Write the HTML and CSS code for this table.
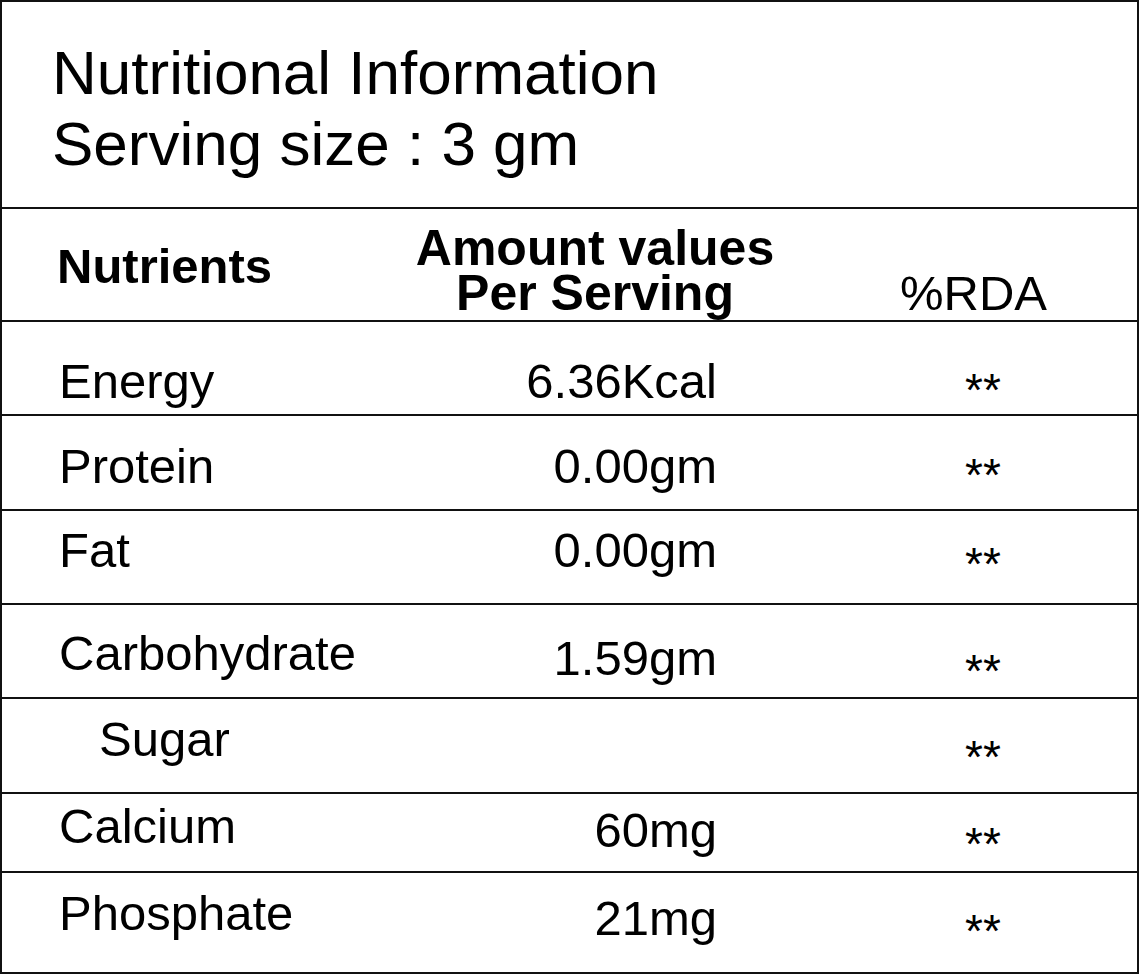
FILE: index.html
```html
<!DOCTYPE html>
<html lang="en">
<head>
<meta charset="utf-8">
<title>Nutritional Information</title>
<link rel="stylesheet" href="styles.css">
</head>
<body>
<div class="label">
  <div class="title">Nutritional Information<br>Serving size : 3 gm</div>
  <div class="head">
    <div class="h-name">Nutrients</div>
    <div class="h-amount"><div class="h-line">Amount values</div><div class="h-line">Per Serving</div></div>
    <div class="h-rda">%RDA</div>
  </div>
  <div class="row energy"><div class="name">Energy</div><div class="amt">6.36Kcal</div><div class="rda">**</div></div>
  <div class="row protein"><div class="name">Protein</div><div class="amt">0.00gm</div><div class="rda">**</div></div>
  <div class="row fat"><div class="name">Fat</div><div class="amt">0.00gm</div><div class="rda">**</div></div>
  <div class="row carb"><div class="name">Carbohydrate</div><div class="amt">1.59gm</div><div class="rda">**</div></div>
  <div class="row sugar"><div class="name sub">Sugar</div><div class="amt"></div><div class="rda">**</div></div>
  <div class="row calcium"><div class="name">Calcium</div><div class="amt">60mg</div><div class="rda">**</div></div>
  <div class="row phosphate"><div class="name">Phosphate</div><div class="amt">21mg</div><div class="rda">**</div></div>
</div>
</body>
</html>
```

FILE: styles.css
```css
html, body {
  margin: 0;
  padding: 0;
  background: #fff;
}

body {
  font-family: "Liberation Sans", Arial, sans-serif;
  color: #000;
}

.label {
  width: 1139px;
  box-sizing: border-box;
  border: 2px solid #111;
}

.title {
  height: 205px;
  box-sizing: border-box;
  padding: 35px 0 0 50px;
  font-size: 62px;
  line-height: 71px;
}

.head {
  height: 113px;
  box-sizing: border-box;
  border-top: 2px solid #111;
  display: grid;
  grid-template-columns: 400px 386px 1fr;
}

.h-name {
  font-weight: bold;
  font-size: 49px;
  line-height: 49px;
  padding: 33px 0 0 55px;
}

.h-amount {
  font-weight: bold;
  font-size: 50px;
  text-align: center;
  white-space: nowrap;
  padding-top: 19px;
}

.h-line {
  height: 45px;
  line-height: 40px;
}

.h-rda {
  font-size: 49px;
  line-height: 49px;
  padding: 60px 0 0 112px;
}

.row {
  box-sizing: border-box;
  border-top: 2px solid #111;
  display: grid;
  grid-template-columns: 400px 315px 1fr;
  font-size: 49px;
  line-height: 49px;
}

.name {
  padding-left: 57px;
}

.name.sub {
  padding-left: 97px;
}

.amt {
  text-align: right;
}

.rda {
  font-size: 46px;
  line-height: 46px;
  padding-left: 248px;
}

.energy { height: 94px; }
.energy .name, .energy .amt { padding-top: 35px; }
.energy .rda { padding-top: 45px; }

.protein { height: 95px; }
.protein .name, .protein .amt { padding-top: 26px; }
.protein .rda { padding-top: 36px; }

.fat { height: 94px; }
.fat .name, .fat .amt { padding-top: 15px; }
.fat .rda { padding-top: 30px; }

.carb { height: 94px; }
.carb .name { padding-top: 24px; }
.carb .amt { padding-top: 29px; }
.carb .rda { padding-top: 43px; }

.sugar { height: 95px; }
.sugar .name { padding-top: 16px; }
.sugar .rda { padding-top: 35px; }

.calcium { height: 79px; }
.calcium .name { padding-top: 8px; }
.calcium .amt { padding-top: 12px; }
.calcium .rda { padding-top: 27px; }

.phosphate { height: 101px; }
.phosphate .name { padding-top: 16px; }
.phosphate .amt { padding-top: 21px; }
.phosphate .rda { padding-top: 35px; }
```
